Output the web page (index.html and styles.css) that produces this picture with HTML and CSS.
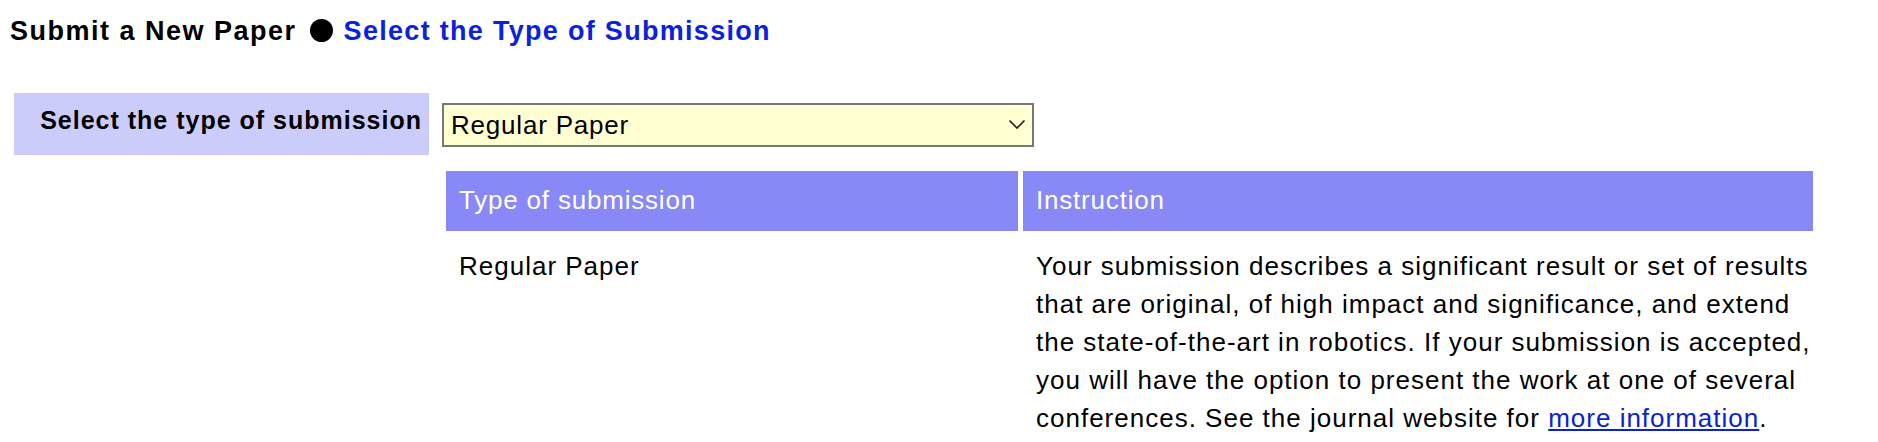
FILE: index.html
```html
<!DOCTYPE html>
<html lang="en">
<head>
<meta charset="utf-8">
<title>Submit a New Paper</title>
<link rel="stylesheet" href="styles.css">
</head>
<body>
<h1 class="title">Submit a New Paper <span class="dot" aria-label="●"></span> <span class="sub">Select the Type of Submission</span></h1>
<div class="form">
  <div class="label">Select the type of submission</div>
  <div class="content">
    <div class="select-wrap">
      <select class="select">
        <option>Regular Paper</option>
      </select>
      <svg class="chev" width="18" height="11" viewBox="0 0 18 11"><path d="M1.5 1.5 L9 9 L16.5 1.5" fill="none" stroke="#222" stroke-width="1.7"/></svg>
    </div>
    <div class="types">
      <div class="th">Type of submission</div>
      <div class="th">Instruction</div>
      <div class="td">Regular Paper</div>
      <div class="td instr">Your submission describes a significant result or set of results<br>that are original, of high impact and significance, and extend<br>the state-of-the-art in robotics. If your submission is accepted,<br>you will have the option to present the work at one of several<br>conferences. See the journal website for <a href="#" class="more">more information</a>.</div>
    </div>
  </div>
</div>
</body>
</html>
```
FILE: styles.css
```css
body {
  margin: 0;
  padding: 0;
  background: #ffffff;
  color: #000000;
  font-family: "Liberation Sans", Arial, sans-serif;
}

.title {
  margin: 0;
  padding: 14px 10px 0;
  font-size: 27px;
  line-height: 34px;
  font-weight: bold;
  letter-spacing: 1.5px;
  white-space: nowrap;
}

.title .dot {
  display: inline-block;
  width: 23px;
  height: 23px;
  border-radius: 50%;
  background: #000000;
  vertical-align: -2px;
  margin: 0 2px 0 4px;
}

.title .sub {
  color: #0b22dc;
  letter-spacing: 1.3px;
}

.form {
  display: flex;
  align-items: flex-start;
  margin-top: 45px;
  padding-left: 14px;
}

.label {
  box-sizing: border-box;
  width: 415px;
  height: 62px;
  background: #ccccfb;
  display: flex;
  align-items: center;
  justify-content: flex-end;
  padding: 0 7px 8px 0;
  font-size: 25px;
  font-weight: bold;
  letter-spacing: 1px;
  white-space: nowrap;
}

.content {
  margin-left: 13px;
  padding-top: 10px;
}

.select-wrap {
  position: relative;
  width: 592px;
  height: 44px;
}

.select {
  appearance: none;
  -webkit-appearance: none;
  box-sizing: border-box;
  width: 100%;
  height: 100%;
  margin: 0;
  border: 2px solid #777777;
  border-radius: 0;
  background: #ffffd2;
  padding: 0 0 0 7px;
  font-family: "Liberation Sans", Arial, sans-serif;
  font-size: 26px;
  letter-spacing: 0.8px;
  color: #000000;
}

.chev {
  position: absolute;
  right: 8px;
  top: 16px;
}

.types {
  display: grid;
  grid-template-columns: 572px 790px;
  column-gap: 5px;
  margin: 24px 0 0 4px;
}

.th {
  box-sizing: border-box;
  height: 60px;
  background: #8889f6;
  color: #ffffff;
  display: flex;
  align-items: center;
  padding: 0 13px 2px;
  font-size: 26px;
  letter-spacing: 0.8px;
}

.td {
  padding: 16px 13px 0;
  font-size: 26px;
  line-height: 38px;
  letter-spacing: 1px;
  white-space: nowrap;
}

.td.instr {
  padding-left: 13px;
}

.more {
  color: #0b22cc;
  text-decoration: underline;
}
```
